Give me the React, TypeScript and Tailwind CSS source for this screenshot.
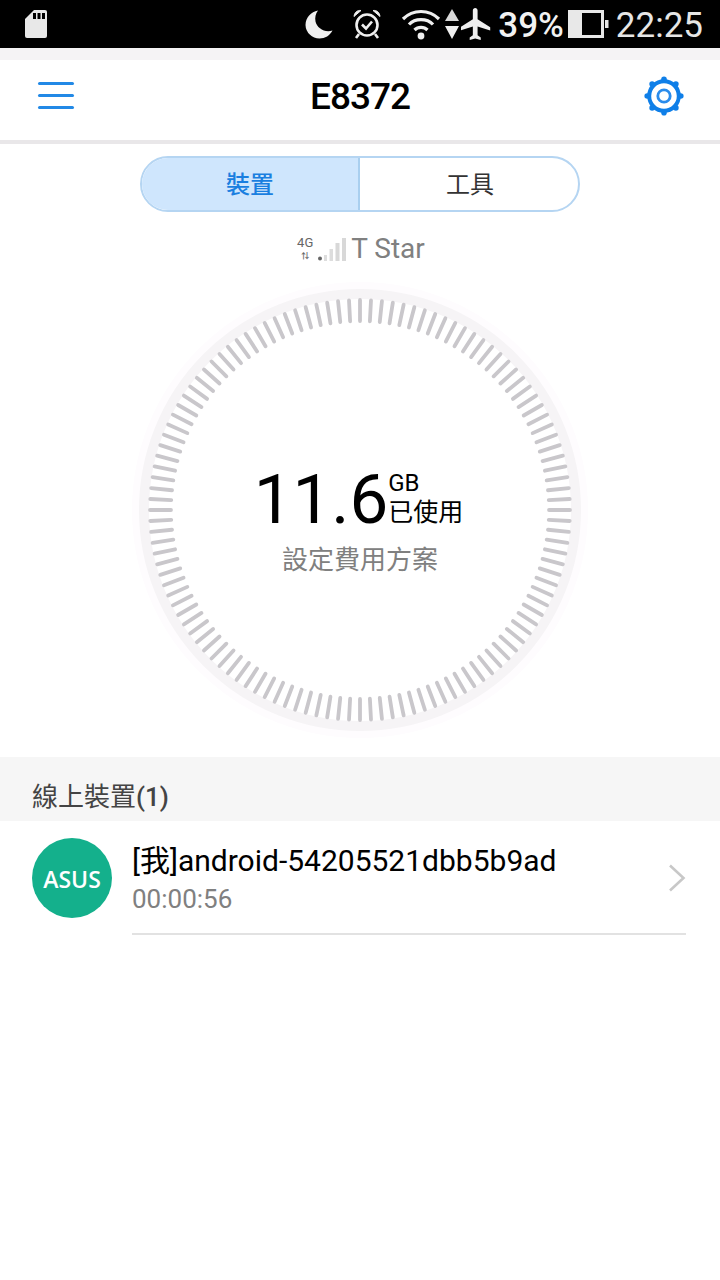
import React from 'react';

const TICK_COUNT = 120;

const ticks = Array.from({ length: TICK_COUNT }, (_, i) => {
  const a = (i / TICK_COUNT) * Math.PI * 2;
  return {
    x1: 230 + Math.sin(a) * 189,
    y1: 230 - Math.cos(a) * 189,
    x2: 230 + Math.sin(a) * 210,
    y2: 230 - Math.cos(a) * 210,
  };
});

const SdCard = () => (
  <svg width="24" height="28" viewBox="0 0 24 28" className="block">
    <path d="M10 0H21a2 2 0 0 1 2 2V26a2 2 0 0 1-2 2H3a2 2 0 0 1-2-2V9z" fill="#e8e8e8" />
    <rect x="9" y="3" width="3" height="6" fill="#000" />
    <rect x="13.5" y="3" width="3" height="6" fill="#000" />
    <rect x="18" y="3" width="3" height="6" fill="#000" />
  </svg>
);

const Moon = () => (
  <svg width="28" height="29" viewBox="0 0 28 29" className="block">
    <path d="M13 0.5C6 2 0.5 7.5 0.5 15A14 14 0 0 0 14.5 28.5C20 28.5 25 25.5 27.5 20.5C19.5 23 12 18 10.5 11.5C9.8 7.5 10.5 3.5 13 0.5z" fill="#efefef" />
  </svg>
);

const AlarmClock = () => (
  <svg width="30" height="32" viewBox="0 0 30 32" fill="none" stroke="#efefef" className="block">
    <circle cx="15" cy="17" r="10.5" strokeWidth="2.6" />
    <path d="M10 16.5l4 4 6-7" strokeWidth="2.6" />
    <path d="M2 8.5C2.5 4 5.5 2 9 2.5z" fill="#efefef" strokeWidth="1" />
    <path d="M28 8.5C27.5 4 24.5 2 21 2.5z" fill="#efefef" strokeWidth="1" />
    <path d="M7 26l-3 4M23 26l3 4" strokeWidth="2.6" />
  </svg>
);

const Wifi = () => (
  <svg width="40" height="32" viewBox="0 0 40 32" fill="none" stroke="#efefef" strokeWidth="3.2" className="block">
    <path d="M2 11C12 1 28 1 38 11" />
    <path d="M8 16.5C14 10 26 10 32 16.5" />
    <path d="M13.5 22C17 18.5 23 18.5 26.5 22" />
    <circle cx="20" cy="28" r="3.4" fill="#efefef" stroke="none" />
  </svg>
);

const DataArrows = () => (
  <svg width="14" height="30" viewBox="0 0 14 30" className="block">
    <path d="M7 0L14 12H0z" fill="#d8d8d8" />
    <path d="M7 30L14 17H0z" fill="#efefef" />
  </svg>
);

const Plane = () => (
  <svg width="30" height="32" viewBox="2 2 19 20" className="block" preserveAspectRatio="none">
    <path d="M21 16v-2l-8-5V3.5c0-.83-.67-1.5-1.5-1.5S10 2.67 10 3.5V9l-8 5v2l8-2.5V19l-2 1.5V22l3.5-1 3.5 1v-1.5L13 19v-5.5l8 2.5z" fill="#efefef" transform="translate(-0.5 0)" />
  </svg>
);

const Battery = () => (
  <svg width="41" height="28" viewBox="0 0 41 28" className="block">
    <path d="M0 0H36V28H0z" fill="#e8e8e8" />
    <rect x="14" y="3" width="19" height="22" fill="#000" />
    <rect x="37" y="10" width="3.5" height="8" fill="#e8e8e8" />
  </svg>
);

const Gear = () => {
  const teeth = Array.from({ length: 8 }, (_, i) => (i * Math.PI) / 4);
  return (
    <svg width="40" height="40" viewBox="0 0 40 40" className="block mt-[2px]" fill="none">
      {teeth.map((a, i) => (
        <circle key={i} cx={20 + Math.sin(a) * 16.8} cy={20 - Math.cos(a) * 16.8} r="2.8" fill="#0f7fe8" />
      ))}
      <circle cx="20" cy="20" r="14.8" stroke="#0f7fe8" strokeWidth="4" />
      <circle cx="20" cy="20" r="6.2" stroke="#2a8cec" strokeWidth="2.8" />
    </svg>
  );
};

const SignalBars = () => (
  <svg width="29" height="24" viewBox="0 0 29 24" className="block">
    <circle cx="2" cy="21.5" r="2" fill="#666" />
    <rect x="6" y="18" width="3" height="6" fill="#ddd" />
    <rect x="11.5" y="12" width="3.5" height="12" fill="#ddd" />
    <rect x="17.5" y="6" width="4" height="18" fill="#d8d8d8" />
    <rect x="24" y="1" width="4" height="23" fill="#d8d8d8" />
  </svg>
);

const Gauge = () => (
  <div className="relative w-[460px] h-[460px]">
    <svg width="460" height="460" viewBox="0 0 460 460" className="block">
      <circle cx="230" cy="230" r="224" fill="none" stroke="#fefcfe" strokeWidth="8" />
      <circle cx="230" cy="230" r="216" fill="none" stroke="#f6f4f6" strokeWidth="10" />
      {ticks.map((t, i) => (
        <line key={i} x1={t.x1} y1={t.y1} x2={t.x2} y2={t.y2} stroke="#c9c7cb" strokeWidth="3.8" strokeLinecap="round" />
      ))}
    </svg>
    <div className="absolute inset-0 flex flex-col items-center pt-[180px]">
      <div className="flex items-start pr-[3px]">
        <span className="text-[69px] leading-[80px] text-black">11.6</span>
        <div className="flex flex-col pt-[10px] text-black">
          <span className="text-[24px] leading-[26px]">GB</span>
          <span className="text-[25px] leading-[28px] mt-[3px]">已使用</span>
        </div>
      </div>
      <span className="text-[26px] leading-[34px] mt-[3px] text-[#808080]">設定費用方案</span>
    </div>
  </div>
);

const App: React.FC = () => {
  return (
    <div className="w-[720px] h-[1280px] bg-white overflow-hidden flex flex-col font-['Roboto','Noto_Sans_CJK_TC',sans-serif]">
      {/* status bar */}
      <div className="h-[48px] bg-black flex items-center justify-between pl-[24px] pr-[17px] shrink-0">
        <SdCard />
        <div className="flex items-center text-[#f2f2f2]">
          <Moon />
          <div className="ml-[19px]"><AlarmClock /></div>
          <div className="ml-[19px]"><Wifi /></div>
          <div className="ml-[4px]"><DataArrows /></div>
          <div className="ml-[2px]"><Plane /></div>
          <span className="ml-[7px] mt-[4px] text-[35px] leading-[44px] font-medium">39%</span>
          <div className="ml-[4px]"><Battery /></div>
          <span className="ml-[7px] mt-[4px] text-[35px] leading-[44px] text-[#e6e6e6]">22:25</span>
        </div>
      </div>

      {/* header */}
      <div className="h-[12px] bg-[#f5f3f5] shrink-0" />
      <div className="h-[84px] shrink-0 flex items-center justify-between pl-[38px] pr-[36px] pb-[10px] border-b-4 border-[#e9e7e9]">
        <div className="flex flex-col gap-[9px] w-[36px]">
          <div className="h-[3px] rounded-full bg-[#2289e6]" />
          <div className="h-[3px] rounded-full bg-[#2289e6]" />
          <div className="h-[3px] rounded-full bg-[#2289e6]" />
        </div>
        <span className="text-[37px] tracking-[-1px] leading-[44px] mt-[4px] ml-[2px] font-medium text-black">E8372</span>
        <Gear />
      </div>

      {/* tabs */}
      <div className="flex justify-center pt-[12px] shrink-0">
        <div className="w-[440px] h-[56px] rounded-full border-2 border-[#b5d5f2] flex overflow-hidden">
          <div className="w-[218px] pt-[2px] bg-[#cfe6fd] border-r-2 border-[#a9cfef] flex items-center justify-center text-[24px] font-medium text-[#1a7fe0]">裝置</div>
          <div className="flex-1 pt-[2px] pl-[2px] flex items-center justify-center text-[24px] text-[#333]">工具</div>
        </div>
      </div>

      {/* network name */}
      <div className="flex justify-center items-center h-[40px] mt-[17px] shrink-0">
        <div className="flex flex-col items-center w-[20px] mr-[3px]">
          <span className="text-[13px] leading-[13px] text-[#666]">4G</span>
          <span className="text-[8px] leading-[10px] text-[#666] mt-[3px] font-bold">⇅</span>
        </div>
        <SignalBars />
        <span className="ml-[4px] text-[28px] text-[#808080]">T Star</span>
      </div>

      {/* gauge */}
      <div className="flex justify-center pt-[11px] shrink-0">
        <Gauge />
      </div>

      {/* online devices */}
      <div className="mt-[17px] h-[64px] bg-[#f6f6f6] shrink-0 flex items-end pl-[32px] pb-[6px]">
        <span className="text-[26px] leading-[36px] text-[#444]">線上裝置<span className="font-medium">(1)</span></span>
      </div>
      <div className="flex pl-[32px] pr-[34px] pt-[17px]">
        <div className="w-[80px] h-[80px] pt-[3px] rounded-full bg-[#14b08c] flex items-center justify-center text-white text-[23px] font-semibold font-['Open_Sans',sans-serif] shrink-0">ASUS</div>
        <div className="ml-[20px] flex-1 border-b-2 border-[#e2e2e2] h-[97px] pt-[1px] flex items-start justify-between">
          <div className="flex flex-col">
            <span className="text-[30px] leading-[44px] text-black">[我]android-54205521dbb5b9ad</span>
            <span className="text-[26px] leading-[32px] text-[#808080]">00:00:56</span>
          </div>
          <svg width="18" height="28" viewBox="0 0 18 28" fill="none" stroke="#c8c8c8" strokeWidth="2.6" className="mt-[25px]">
            <path d="M2 1.5L15.5 14L2 26.5" />
          </svg>
        </div>
      </div>
    </div>
  );
};

export default App;
